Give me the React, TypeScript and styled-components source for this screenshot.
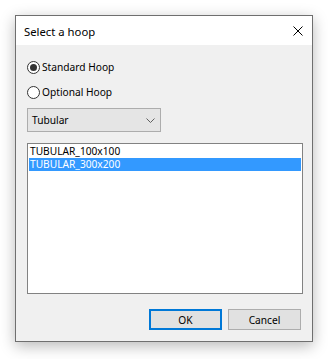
import React, { useState } from "react";
import styled, { createGlobalStyle } from "styled-components";

const GlobalStyle = createGlobalStyle`
  html, body {
    margin: 0;
    padding: 0;
    background: #ffffff;
  }
  body {
    font-family: "Noto Sans", "Open Sans", sans-serif;
    font-size: 10.2px;
    color: #000000;
  }
`;

const Page = styled.div`
  padding: 15px;
  width: 328px;
  height: 359px;
  box-sizing: border-box;
`;

const Window = styled.div`
  display: flex;
  flex-direction: column;
  width: 298px;
  height: 327px;
  box-sizing: border-box;
  border: 1px solid #6f6f6f;
  background: #f0f0f0;
  box-shadow: 0 4px 14px rgba(0, 0, 0, 0.28);
`;

const TitleBar = styled.div`
  display: flex;
  align-items: center;
  justify-content: space-between;
  height: 29px;
  padding: 0 9px 0 8px;
  background: #ffffff;
  font-size: 11.3px;
`;

const Title = styled.span`
  margin-top: 1px;
`;

const CloseButton = styled.div`
  display: flex;
  align-items: center;
  justify-content: center;
  width: 10px;
  height: 10px;
`;

const Body = styled.div`
  display: flex;
  flex: 1;
  flex-direction: column;
  padding: 12px 9px 11px 11px;
`;

const RadioRow = styled.label`
  display: flex;
  align-items: center;
  height: 20px;
  margin-bottom: 5px;
  cursor: default;
`;

const RadioCircle = styled.span<{ $checked: boolean }>`
  position: relative;
  width: 13px;
  height: 13px;
  box-sizing: border-box;
  border: 1px solid #333333;
  border-radius: 50%;
  background: #ffffff;
  margin-right: 2px;

  &::after {
    content: "";
    display: ${({ $checked }) => ($checked ? "block" : "none")};
    position: absolute;
    left: 2px;
    top: 2px;
    width: 7px;
    height: 7px;
    border-radius: 50%;
    background: #333333;
  }
`;

const Select = styled.div`
  display: flex;
  align-items: center;
  justify-content: space-between;
  width: 134px;
  height: 24px;
  box-sizing: border-box;
  margin-top: 1px;
  padding: 0 5px 0 4px;
  border: 1px solid #adadad;
  background: #e5e5e5;
`;

const ListBox = styled.div`
  display: flex;
  flex-direction: column;
  height: 151px;
  box-sizing: border-box;
  margin-top: 11px;
  padding: 1px;
  border: 1px solid #828282;
  background: #ffffff;
`;

const ListItem = styled.div<{ $selected?: boolean }>`
  height: 13px;
  line-height: 13px;
  padding-left: 1px;
  background: ${({ $selected }) => ($selected ? "#3399ff" : "transparent")};
  color: ${({ $selected }) => ($selected ? "#ffffff" : "#000000")};
  white-space: nowrap;
  overflow: hidden;
`;

const ButtonRow = styled.div`
  display: flex;
  justify-content: flex-end;
  gap: 6px;
  margin-top: 15px;
  padding-right: 2px;
`;

const Button = styled.div<{ $default?: boolean }>`
  display: flex;
  align-items: center;
  justify-content: center;
  width: 73px;
  height: 21px;
  box-sizing: border-box;
  border: ${({ $default }) =>
    $default ? "2px solid #0078d7" : "1px solid #adadad"};
  background: #e1e1e1;
`;

const items = ["TUBULAR_100x100", "TUBULAR_300x200"];

const App: React.FC = () => {
  const [hoop, setHoop] = useState<"standard" | "optional">("standard");
  const [selected, setSelected] = useState(1);

  return (
    <Page>
      <GlobalStyle />
      <Window>
        <TitleBar>
          <Title>Select a hoop</Title>
          <CloseButton>
            <svg width="10" height="10" viewBox="0 0 10 10">
              <path d="M0.5 0.5 L9.5 9.5 M9.5 0.5 L0.5 9.5" stroke="#000" strokeWidth="1" />
            </svg>
          </CloseButton>
        </TitleBar>
        <Body>
          <RadioRow onClick={() => setHoop("standard")}>
            <RadioCircle $checked={hoop === "standard"} />
            Standard Hoop
          </RadioRow>
          <RadioRow onClick={() => setHoop("optional")}>
            <RadioCircle $checked={hoop === "optional"} />
            Optional Hoop
          </RadioRow>
          <Select>
            <span>Tubular</span>
            <svg width="9" height="5" viewBox="0 0 9 5">
              <path d="M0.5 0.5 L4.5 4.5 L8.5 0.5" stroke="#606060" fill="none" strokeWidth="1" />
            </svg>
          </Select>
          <ListBox>
            {items.map((item, i) => (
              <ListItem key={item} $selected={i === selected} onClick={() => setSelected(i)}>
                {item}
              </ListItem>
            ))}
          </ListBox>
          <ButtonRow>
            <Button $default>OK</Button>
            <Button>Cancel</Button>
          </ButtonRow>
        </Body>
      </Window>
    </Page>
  );
};

export default App;
